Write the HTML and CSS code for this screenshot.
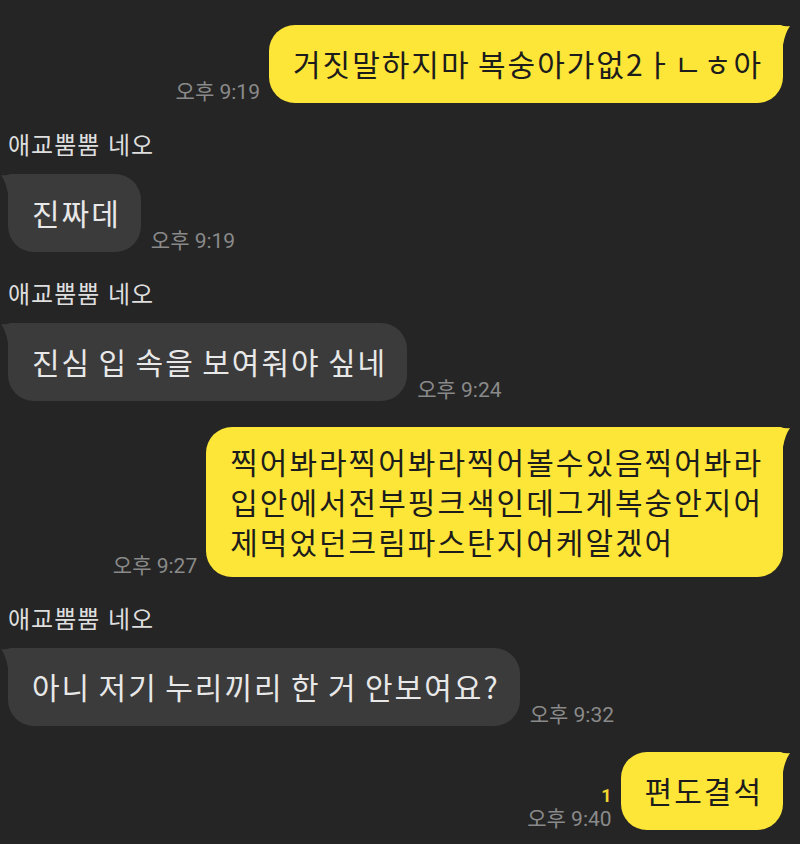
FILE: index.html
```html
<!DOCTYPE html>
<html lang="ko">
<head>
    <meta charset="UTF-8">
    <meta name="viewport" content="width=device-width, initial-scale=1.0">
    <title>채팅</title>
    <link rel="stylesheet" href="styles.css">
</head>
<body>
    <div class="chat">
        <div class="msg mine">
            <div class="meta"><span class="time">오후 9:19</span></div>
            <div class="bubble">거짓말하지마 복숭아가없2ㅏㄴㅎ아<svg class="tail" viewBox="0 0 14 20"><path d="M0 0 H3 Q9 2 13 1 Q8 8 6 20 H0 Z"/></svg></div>
        </div>

        <div class="msg theirs">
            <div class="name">애교뿜뿜 네오</div>
            <div class="line">
                <div class="bubble">진짜데<svg class="tail" viewBox="0 0 14 20"><path d="M0 0 H3 Q9 2 13 1 Q8 8 6 20 H0 Z"/></svg></div>
                <span class="time">오후 9:19</span>
            </div>
        </div>

        <div class="msg theirs">
            <div class="name">애교뿜뿜 네오</div>
            <div class="line">
                <div class="bubble">진심 입 속을 보여줘야 싶네<svg class="tail" viewBox="0 0 14 20"><path d="M0 0 H3 Q9 2 13 1 Q8 8 6 20 H0 Z"/></svg></div>
                <span class="time">오후 9:24</span>
            </div>
        </div>

        <div class="msg mine">
            <div class="meta"><span class="time">오후 9:27</span></div>
            <div class="bubble multi">찍어봐라찍어봐라찍어볼수있음찍어봐라<br>입안에서전부핑크색인데그게복숭안지어<br>제먹었던크림파스탄지어케알겠어<svg class="tail" viewBox="0 0 14 20"><path d="M0 0 H3 Q9 2 13 1 Q8 8 6 20 H0 Z"/></svg></div>
        </div>

        <div class="msg theirs">
            <div class="name">애교뿜뿜 네오</div>
            <div class="line">
                <div class="bubble">아니 저기 누리끼리 한 거 안보여요?<svg class="tail" viewBox="0 0 14 20"><path d="M0 0 H3 Q9 2 13 1 Q8 8 6 20 H0 Z"/></svg></div>
                <span class="time">오후 9:32</span>
            </div>
        </div>

        <div class="msg mine">
            <div class="meta">
                <span class="unread">1</span>
                <span class="time">오후 9:40</span>
            </div>
            <div class="bubble">편도결석<svg class="tail" viewBox="0 0 14 20"><path d="M0 0 H3 Q9 2 13 1 Q8 8 6 20 H0 Z"/></svg></div>
        </div>
    </div>
</body>
</html>
```

FILE: styles.css
```css
body {
    margin: 0;
    background-color: #252525;
    font-family: Roboto, "Noto Sans CJK KR", sans-serif;
    color: #e6e6e6;
}
.chat {
    display: flex;
    flex-direction: column;
    padding: 25px 17px 0 8px;
    height: 844px;
    box-sizing: border-box;
    overflow: hidden;
}
.msg {
    margin-top: 26px;
}
.msg:first-child {
    margin-top: 0;
}
.mine {
    display: flex;
    justify-content: flex-end;
    align-items: flex-end;
    gap: 9px;
}
.meta {
    display: flex;
    flex-direction: column;
    align-items: flex-end;
}
.name {
    font-family: "Noto Sans CJK KR", sans-serif;
    font-size: 24px;
    letter-spacing: 1px;
    line-height: 30px;
    color: #dedede;
    margin-bottom: 15px;
}
.line {
    display: flex;
    align-items: flex-end;
    gap: 10px;
}
.time {
    font-size: 21px;
    line-height: 22px;
    color: #8a8a8a;
    white-space: nowrap;
}
.unread {
    font-size: 18px;
    font-weight: bold;
    line-height: 20px;
    color: #f4d630;
    margin-bottom: 2px;
}
.bubble {
    position: relative;
    font-family: "Noto Sans CJK KR", sans-serif;
    font-size: 30px;
    letter-spacing: 2px;
    word-spacing: -3px;
    line-height: 40px;
    padding: 18px 20px 20px 24px;
    border-radius: 26px;
    white-space: nowrap;
}
.bubble.multi {
    padding: 14px 20px 16px 24px;
}
.mine .bubble {
    background-color: #fde637;
    color: #1c1c1c;
    border-top-right-radius: 4px;
}
.theirs .bubble {
    background-color: #3b3b3b;
    color: #e8e8e8;
    border-top-left-radius: 4px;
}
.tail {
    position: absolute;
    top: 0;
    width: 14px;
    height: 20px;
}
.mine .tail {
    right: -8px;
    fill: #fde637;
}
.theirs .tail {
    left: -8px;
    fill: #3b3b3b;
    transform: scaleX(-1);
}
```
